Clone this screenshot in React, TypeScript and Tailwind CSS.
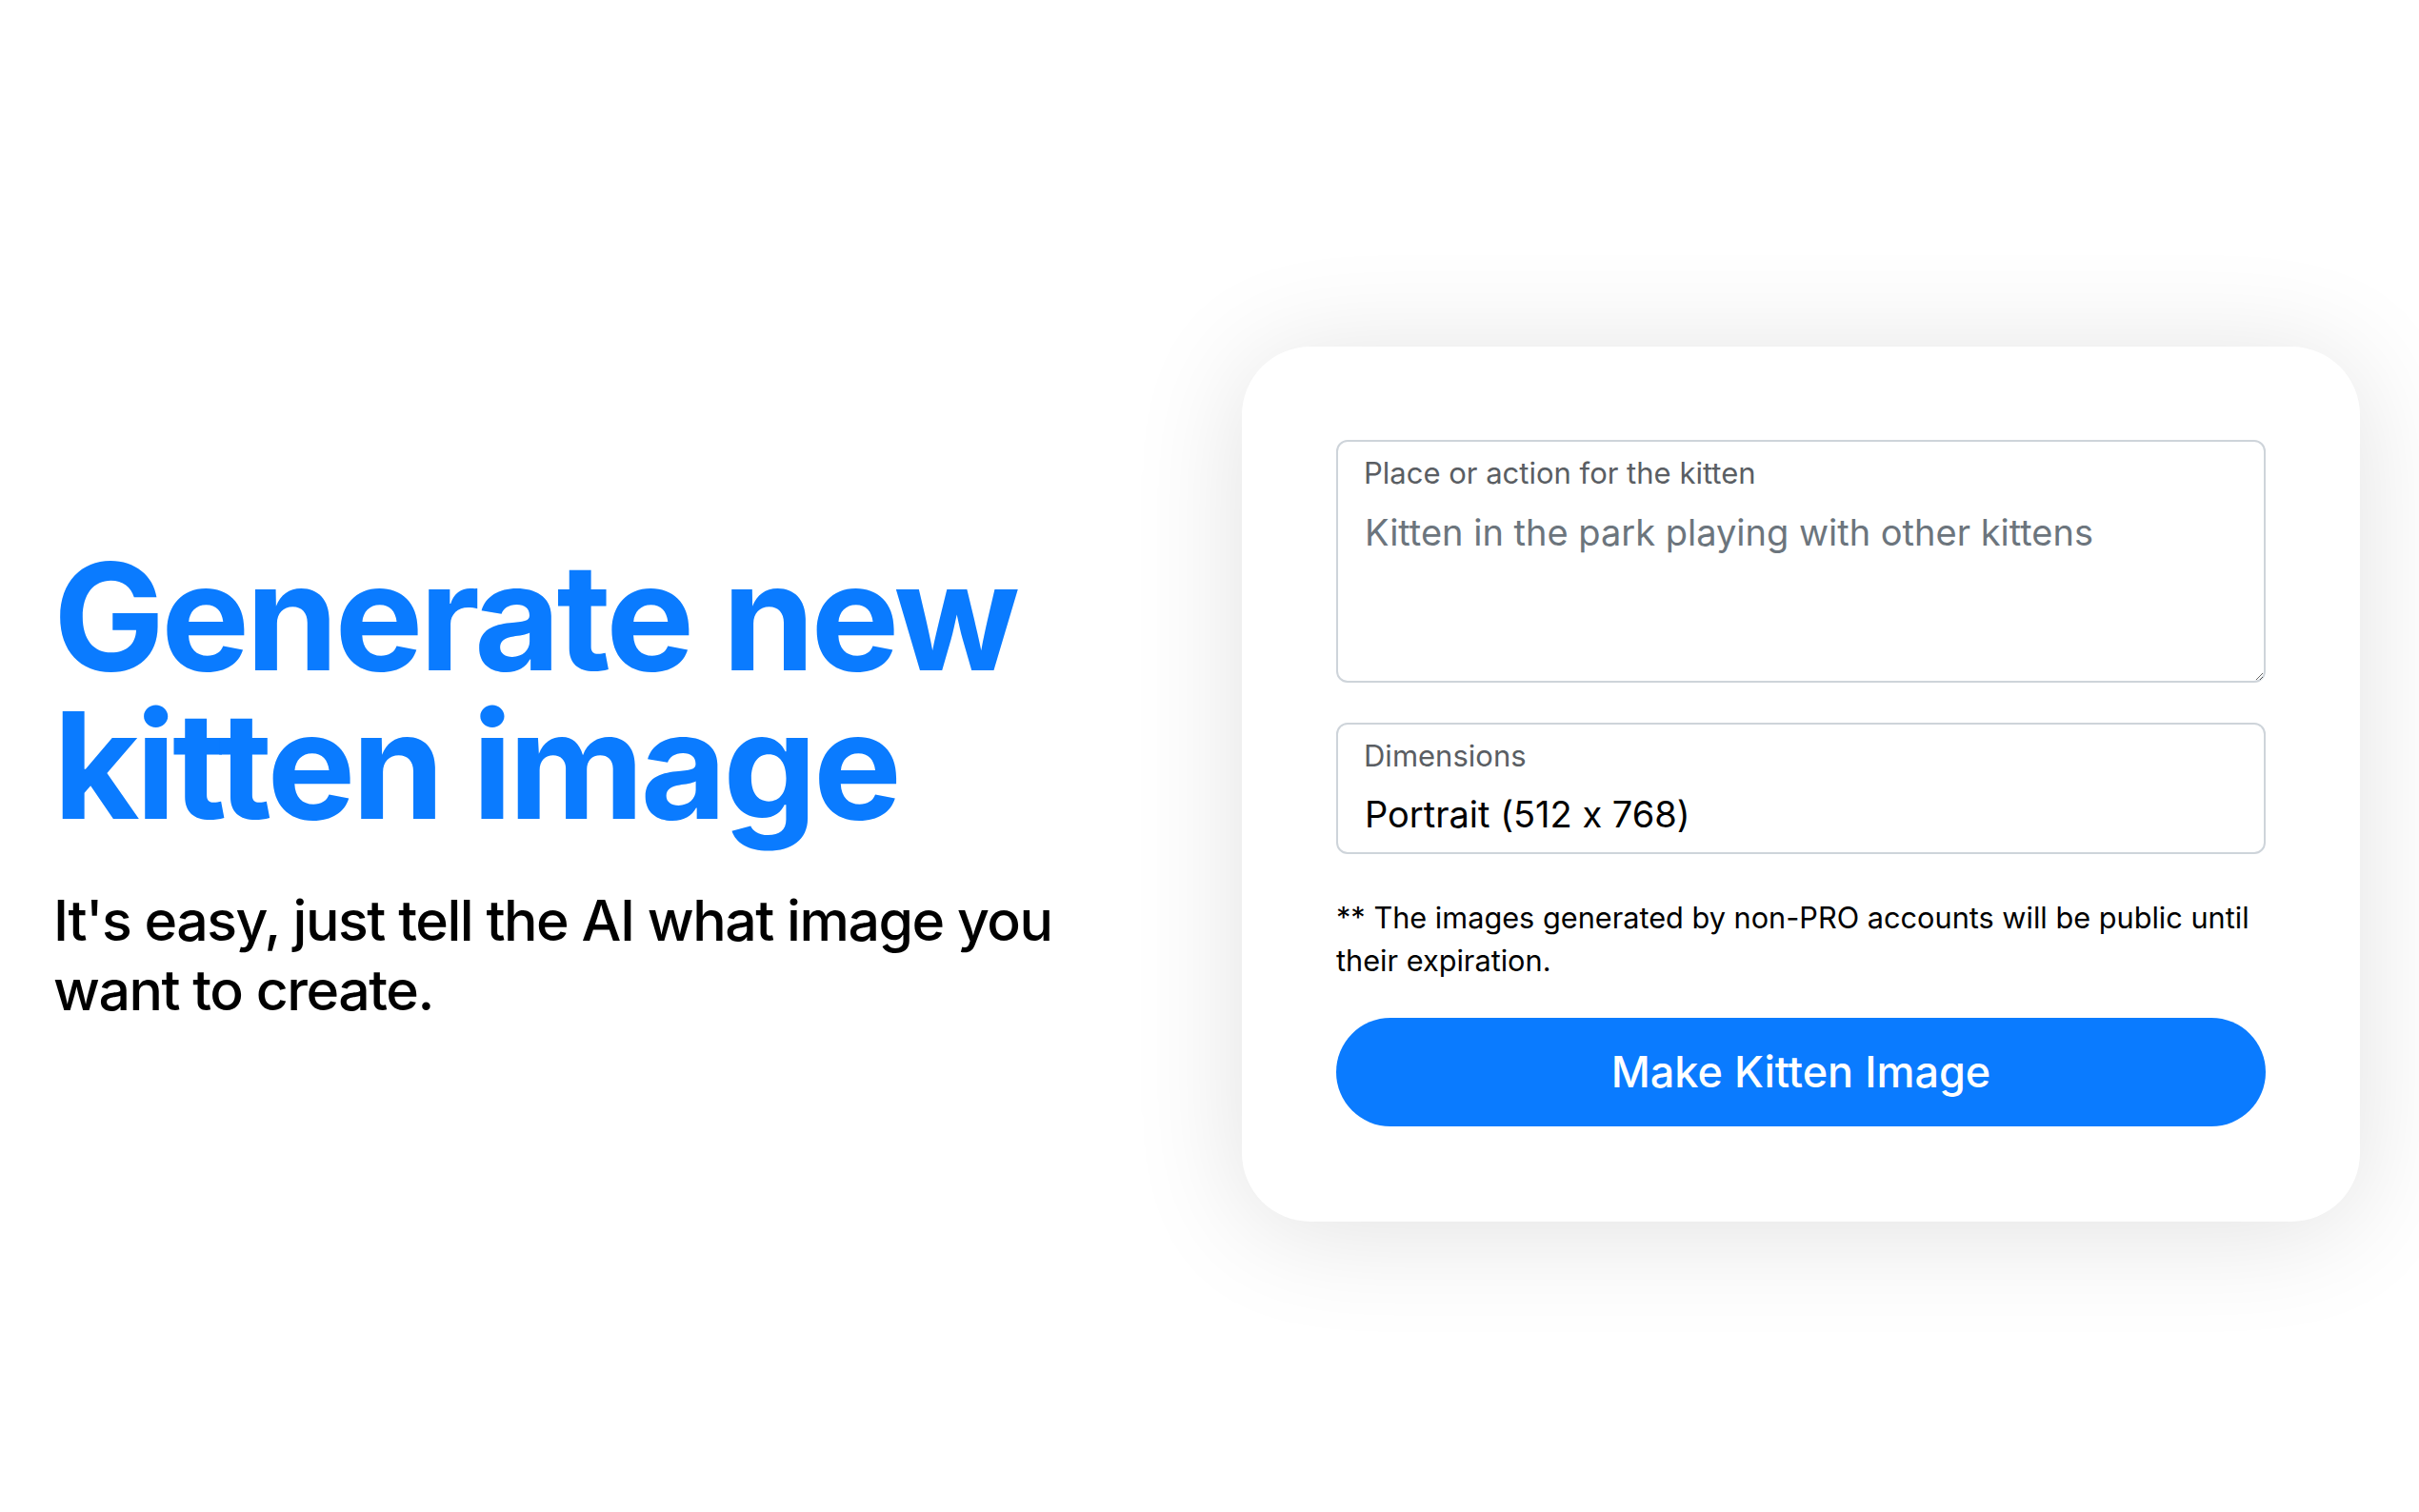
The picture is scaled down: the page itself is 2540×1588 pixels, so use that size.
import React from 'react';

const App: React.FC = () => {
  return (
    <main className="flex h-screen w-full items-center justify-between bg-white pl-[56px] pr-[62px] pt-[58px] font-['Inter',sans-serif] [font-feature-settings:'calt'_0]">
      <section className="flex flex-col">
        <h1 className="text-[156px] font-bold leading-none tracking-tight text-[#0a7bff]">
          Generate new
          <br />
          kitten image
        </h1>
        <p className="mt-[48px] text-[59px] font-medium leading-[73px] tracking-tight text-black">
          It's easy, just tell the AI what image you
          <br />
          want to create.
        </p>
      </section>

      <form className="flex w-[1174px] flex-col rounded-[72px] bg-white px-[99px] pb-[100px] pt-[98px] shadow-[0_10px_120px_rgba(0,0,0,0.12)]">
        <div className="relative">
          <label className="absolute left-[29px] top-[11px] text-[31px] leading-[48px] text-[#5a5e63]">
            Place or action for the kitten
          </label>
          <textarea
            className="block h-[255px] w-full resize-y rounded-[12px] border-2 border-[#ced4da] bg-white px-[28px] pt-[65px] text-[38px] leading-[60px] text-black outline-none placeholder:text-[#6c757d]"
            placeholder="Kitten in the park playing with other kittens"
          />
        </div>

        <div className="relative mt-[42px]">
          <label className="absolute left-[29px] top-[11px] text-[31px] leading-[48px] text-[#5a5e63]">
            Dimensions
          </label>
          <select
            defaultValue="portrait"
            className="block h-[138px] w-full appearance-none rounded-[12px] border-2 border-[#ced4da] bg-white px-[28px] pb-[10px] pt-[64px] text-[38px] leading-[60px] text-black outline-none"
          >
            <option value="portrait">Portrait (512 x 768)</option>
            <option value="landscape">Landscape (768 x 512)</option>
            <option value="square">Square (512 x 512)</option>
          </select>
        </div>

        <p className="mt-[44px] text-[30.7px] leading-[45px] text-black">
          ** The images generated by non-PRO accounts will be public until their expiration.
        </p>

        <button
          type="button"
          className="mt-[38px] h-[114px] w-full rounded-full bg-[#0a7bff] text-[45px] font-medium text-white"
        >
          Make Kitten Image
        </button>
      </form>
    </main>
  );
};

export default App;
